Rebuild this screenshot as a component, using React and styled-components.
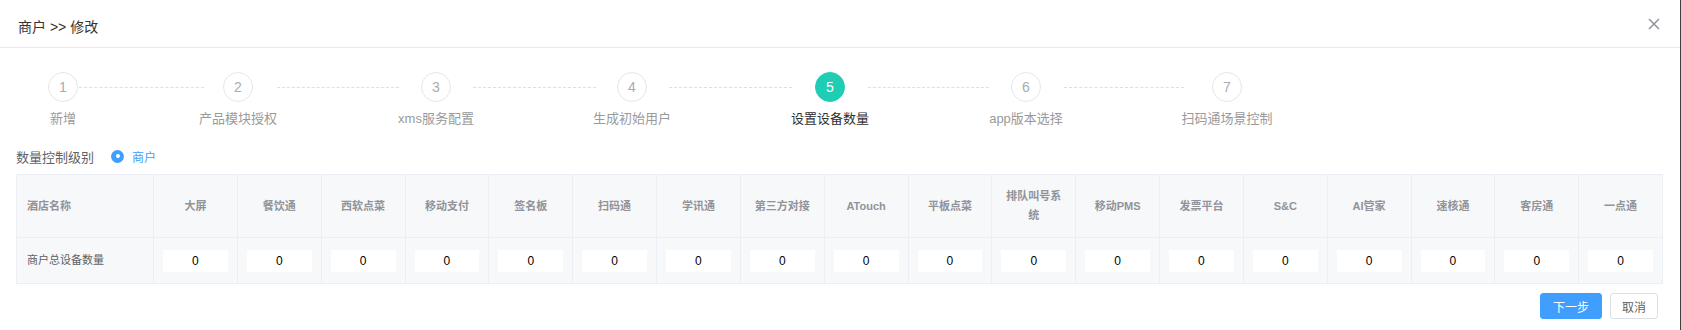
import React from 'react';
import styled, { createGlobalStyle } from 'styled-components';

const Global = createGlobalStyle`
body{
  margin:0;
  background:#3f3f3f;
  font-family:"Liberation Sans","Noto Sans CJK SC",sans-serif;
}
`;

const Dialog = styled.div`
width:1680px;
height:330px;
background:#fff;
box-sizing:border-box;
`;

const Header = styled.div`
height:47px;
border-bottom:1px solid #e8eaec;
display:flex;
align-items:flex-start;
justify-content:space-between;
padding:0 20px 0 18px;
`;

const Title = styled.div`
margin-top:17px;
font-size:14px;
line-height:20px;
color:#333;
`;

const Close = styled.button`
margin-top:18px;
width:12px;
height:12px;
padding:0;
border:none;
background:none;
display:flex;
`;

const Body = styled.div`
padding:0 17px 0 16px;
`;

const Steps = styled.div`
display:flex;
align-items:flex-start;
padding:24px 0 0 32px;
`;

const Step = styled.div`
width:30px;
display:flex;
flex-direction:column;
align-items:center;
`;

const Circle = styled.div`
width:30px;
height:30px;
box-sizing:border-box;
border-radius:50%;
border:1px solid ${p => (p.$active ? '#1ecdb4' : '#e4e6ea')};
background:${p => (p.$active ? '#1ecdb4' : '#fff')};
color:${p => (p.$active ? '#fff' : '#a8abb2')};
font-size:14px;
display:flex;
align-items:center;
justify-content:center;
`;

const StepLabel = styled.div`
margin-top:8px;
white-space:nowrap;
font-size:13px;
line-height:18px;
color:${p => (p.$active ? '#303133' : '#9a9a9a')};
`;

const Connector = styled.div`
flex:none;
margin-top:15px;
border-top:1px dashed #dcdfe6;
`;

const LevelRow = styled.div`
display:flex;
align-items:center;
margin-top:18px;
height:20px;
`;

const LevelLabel = styled.span`
font-size:13px;
color:#606266;
margin-right:17px;
`;

const Radio = styled.span`
width:13px;
height:13px;
border-radius:50%;
background:#409eff;
display:flex;
align-items:center;
justify-content:center;
margin-right:8px;
&::after{
  content:'';
  width:4px;
  height:4px;
  border-radius:50%;
  background:#fff;
}
`;

const RadioText = styled.span`
font-size:12px;
color:#409eff;
`;

const Table = styled.div`
margin-top:8px;
display:grid;
grid-template-columns:137px repeat(18,1fr);
border:1px solid #ebeef5;
border-right:none;
background:#f7f8fa;
`;

const Cell = styled.div`
box-sizing:border-box;
height:${p => (p.$head ? '63px' : '45px')};
border-right:1px solid #ebeef5;
border-bottom:${p => (p.$head ? '1px solid #ebeef5' : 'none')};
display:flex;
align-items:center;
justify-content:${p => (p.$first ? 'flex-start' : 'center')};
padding:${p => (p.$first ? '0 10px' : p.$head ? '0 12px' : '0 9px')};
text-align:center;
font-size:11px;
line-height:19px;
font-weight:${p => (p.$head ? 700 : 400)};
color:${p => (p.$head ? '#909399' : '#606266')};
`;

const NumInput = styled.input`
width:100%;
min-width:0;
height:22px;
box-sizing:border-box;
border:none;
outline:none;
background:#fff;
text-align:center;
font-family:"Liberation Sans",sans-serif;
font-size:12px;
color:#000;
`;

const Footer = styled.div`
display:flex;
justify-content:flex-end;
gap:8px;
margin-top:9px;
padding-right:5px;
`;

const Button = styled.button`
height:26px;
padding:0 ${p => (p.$primary ? '12px' : '11px')};
border-radius:3px;
border:1px solid ${p => (p.$primary ? '#409eff' : '#dcdfe6')};
background:${p => (p.$primary ? '#409eff' : '#fff')};
color:${p => (p.$primary ? '#fff' : '#606266')};
font-family:inherit;
font-size:12px;
`;

const steps = ['新增', '产品模块授权', 'xms服务配置', '生成初始用户', '设置设备数量', 'app版本选择', '扫码通场景控制'];
// gaps between circles: dashed line start offset, length, end offset
const links = [[1, 125, 19], [24, 122, 22], [22, 123, 21], [22, 123, 23], [23, 121, 22], [23, 120, 28]];

const columns = ['大屏', '餐饮通', '西软点菜', '移动支付', '签名板', '扫码通', '学讯通', '第三方对接', 'ATouch', '平板点菜', '排队叫号系统', '移动PMS', '发票平台', 'S&C', 'AI管家', '速核通', '客房通', '一点通'];

export default function App() {
  return (
    <Dialog>
      <Global />
      <Header>
        <Title>商户 &gt;&gt; 修改</Title>
        <Close>
          <svg width="12" height="12" viewBox="0 0 12 12">
            <path d="M1 1L11 11M11 1L1 11" stroke="#909399" strokeWidth="1.5" />
          </svg>
        </Close>
      </Header>
      <Body>
        <Steps>
          {steps.map((s, i) => (
            <React.Fragment key={s}>
              <Step>
                <Circle $active={i === 4}>{i + 1}</Circle>
                <StepLabel $active={i === 4}>{s}</StepLabel>
              </Step>
              {links[i] && (
                <Connector
                  style={{ marginLeft: links[i][0], width: links[i][1], marginRight: links[i][2] }}
                />
              )}
            </React.Fragment>
          ))}
        </Steps>
        <LevelRow>
          <LevelLabel>数量控制级别</LevelLabel>
          <Radio />
          <RadioText>商户</RadioText>
        </LevelRow>
        <Table>
          <Cell $head $first>酒店名称</Cell>
          {columns.map(c => (
            <Cell $head key={c}>{c}</Cell>
          ))}
          <Cell $first>商户总设备数量</Cell>
          {columns.map(c => (
            <Cell key={c}>
              <NumInput defaultValue="0" />
            </Cell>
          ))}
        </Table>
        <Footer>
          <Button $primary>下一步</Button>
          <Button>取消</Button>
        </Footer>
      </Body>
    </Dialog>
  );
}
